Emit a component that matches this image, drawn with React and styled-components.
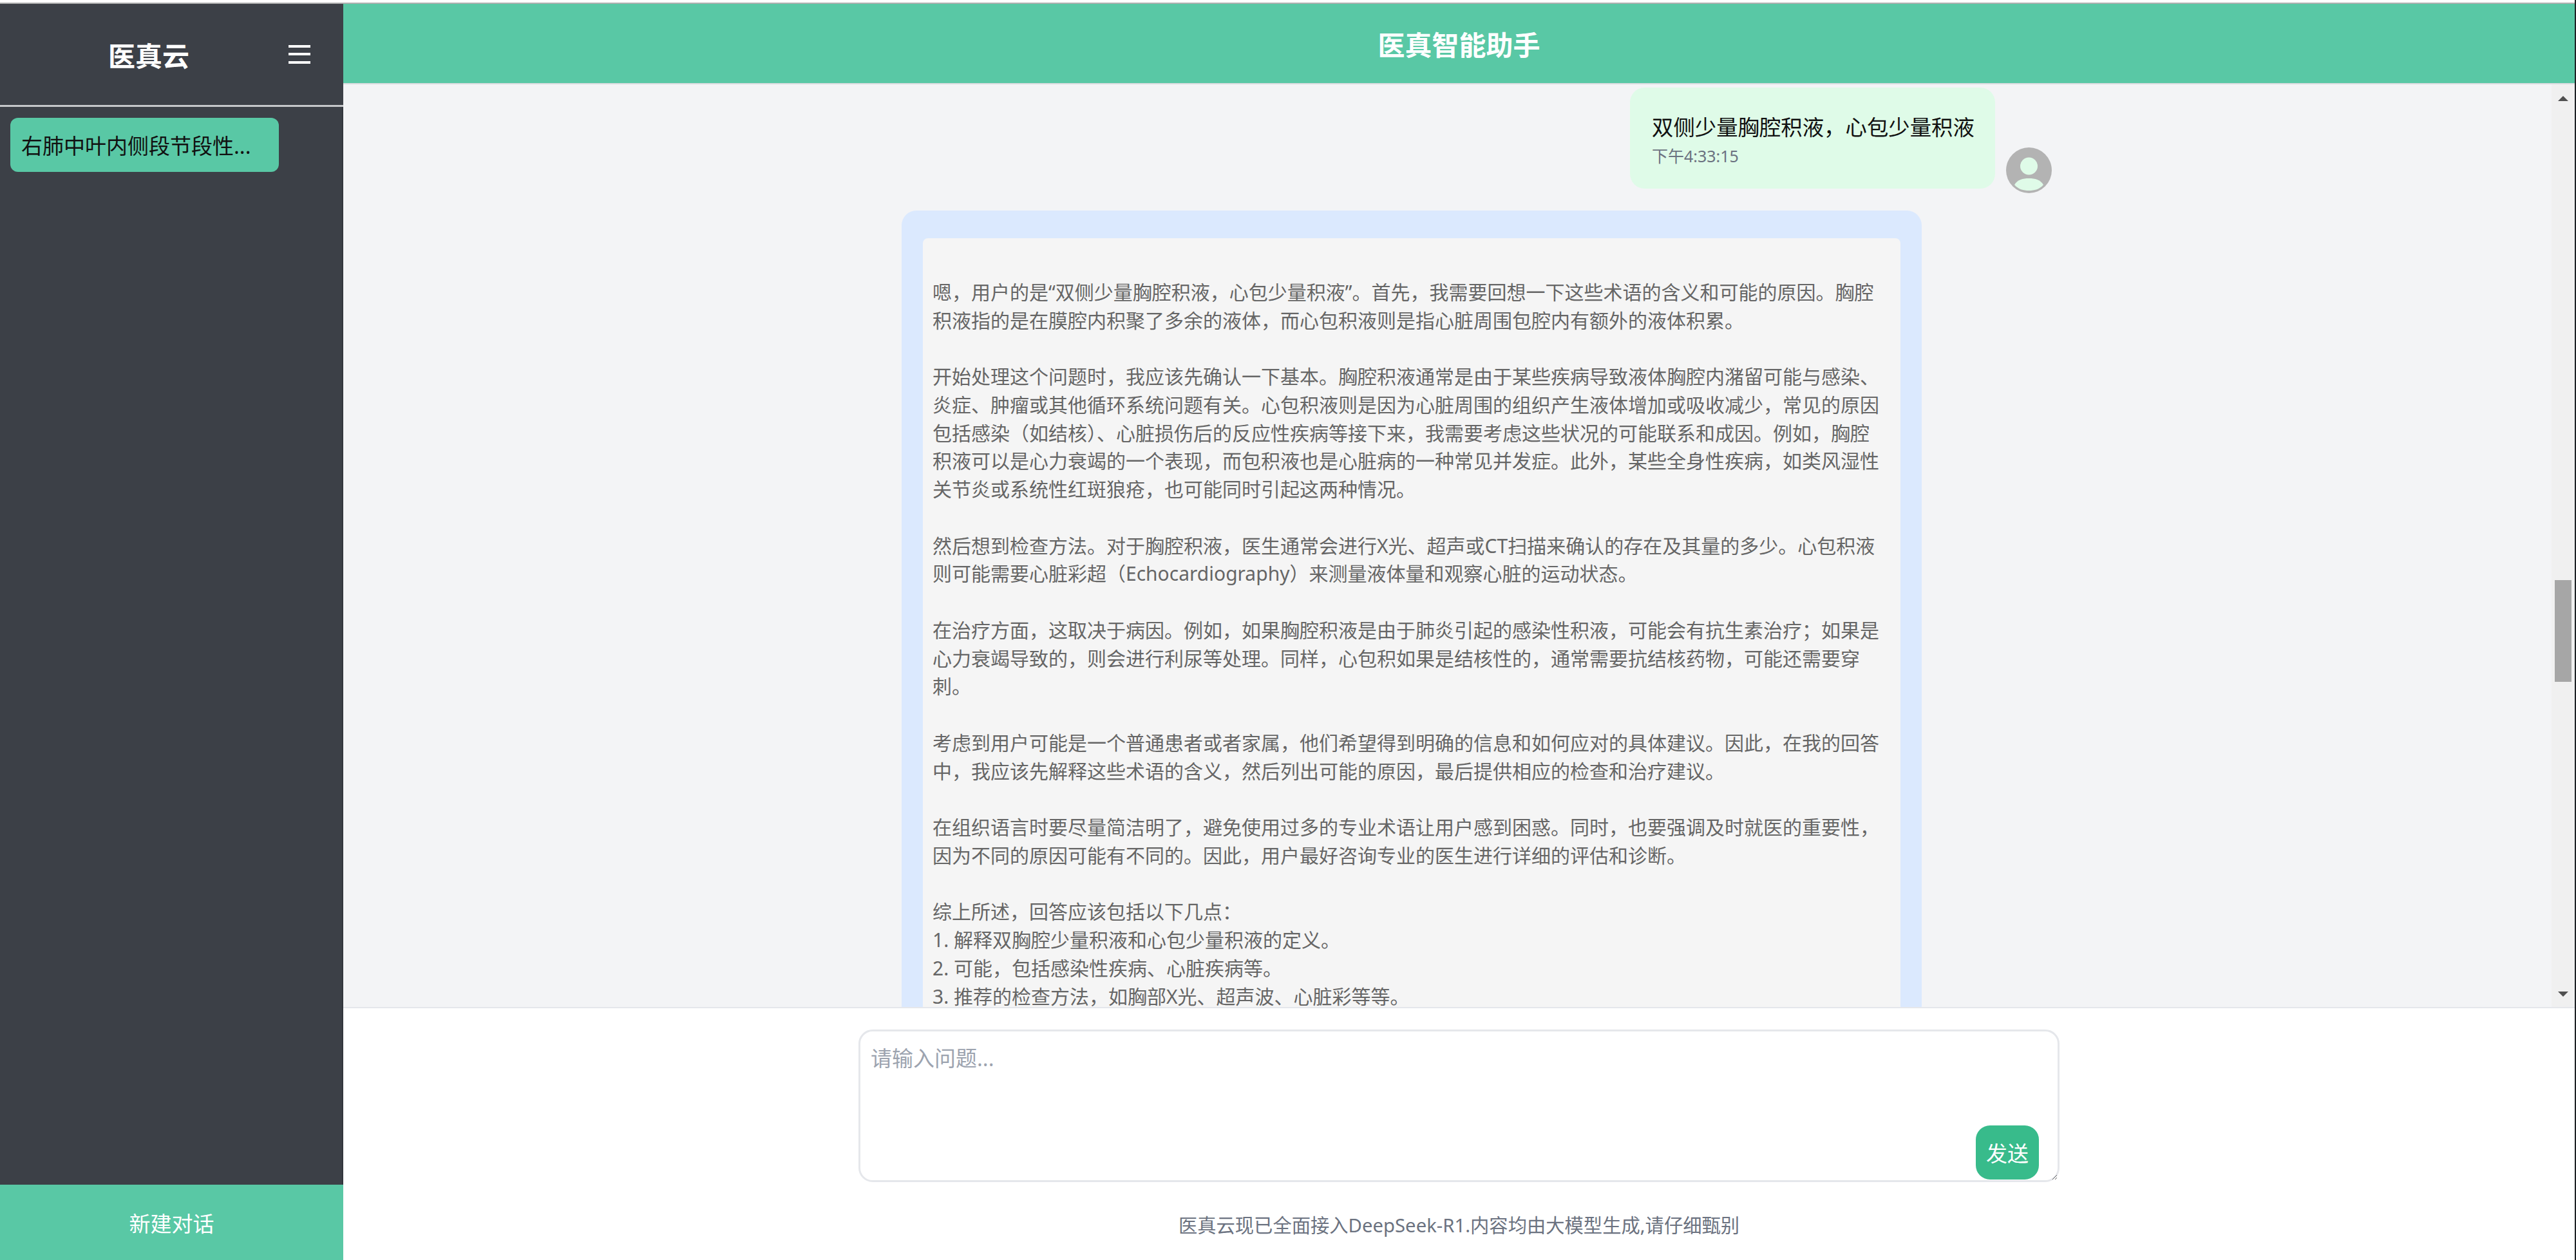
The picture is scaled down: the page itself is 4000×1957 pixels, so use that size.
import React from 'react'
import styled, { createGlobalStyle } from 'styled-components'

const GlobalStyle = createGlobalStyle`
  html, body {
    margin: 0;
    padding: 0;
    background: #fff;
  }
  * {
    box-sizing: border-box;
  }
  body {
    font-family: "Noto Sans", "Noto Sans CJK SC", sans-serif;
  }
`

const Shell = styled.div`
  display: flex;
  flex-direction: column;
  height: 100vh;
  overflow: hidden;
  border-right: 2px solid #1e2226;
`

const TopStrip = styled.div`
  flex: none;
  height: 6px;
  background: #fff;
  border-bottom: 2px solid #b0b0b0;
`

const Body = styled.div`
  flex: 1;
  display: flex;
  min-height: 0;
`

const Sidebar = styled.aside`
  flex: none;
  width: 533px;
  display: flex;
  flex-direction: column;
  background: #3c4047;
`

const SidebarHead = styled.div`
  flex: none;
  height: 160px;
  display: flex;
  align-items: center;
  justify-content: space-between;
  padding: 0 51px 0 168px;
  border-bottom: 3px solid #c6c8cb;
`

const Brand = styled.div`
  font-size: 42px;
  font-weight: 700;
  color: #fff;
  white-space: nowrap;
`

const MenuButton = styled.button`
  display: flex;
  padding: 0;
  border: none;
  background: none;
`

const HistoryList = styled.div`
  flex: 1;
  padding: 17px 16px;
  border-right: 2px solid rgba(0, 0, 0, 0.14);
`

const HistoryItem = styled.div`
  width: 417px;
  height: 84px;
  display: flex;
  align-items: center;
  padding-left: 17px;
  border-radius: 12px;
  background: #59c8a5;
  font-size: 33px;
  color: #111;
  white-space: nowrap;
`

const NewChat = styled.button`
  flex: none;
  height: 117px;
  border: none;
  background: #59c8a5;
  font: inherit;
  font-size: 33px;
  color: #fff;
`

const Main = styled.main`
  flex: 1;
  min-width: 0;
  display: flex;
  flex-direction: column;
`

const MainHeader = styled.header`
  flex: none;
  height: 125px;
  display: flex;
  align-items: center;
  justify-content: center;
  background: #59c8a5;
  border-bottom: 2px solid #d9dcdf;
  font-size: 42px;
  font-weight: 700;
  color: #fff;
`

const ChatArea = styled.div`
  flex: 1;
  min-height: 0;
  display: flex;
  background: #f3f4f6;
`

// left padding balances the scrollbar so the thread stays centred in the main column
const Thread = styled.div`
  flex: 1;
  min-width: 0;
  overflow: hidden;
  display: flex;
  flex-direction: column;
  gap: 27px;
  padding: 5px 0 0 36px;
`

const UserRow = styled.div`
  flex: none;
  width: 1863px;
  margin: 0 auto;
  padding-right: 11px;
  display: flex;
  justify-content: flex-end;
  align-items: flex-end;
  gap: 17px;
`

const UserBubble = styled.div`
  width: 567px;
  height: 157px;
  margin-bottom: 7px;
  padding: 38px 34px 0;
  border-radius: 23px;
  background: #dffbe8;
`

const UserText = styled.div`
  font-size: 33.4px;
  line-height: 46px;
  color: #111;
  white-space: nowrap;
`

const TimeText = styled.div`
  margin-top: 5px;
  font-size: 25px;
  line-height: 34px;
  color: #6b7280;
`

const AvatarIcon = styled.svg`
  flex: none;
  width: 71px;
  height: 71px;
`

const AnswerBubble = styled.div`
  flex: none;
  width: 1584px;
  margin-left: calc((100% - 1863px) / 2 + 66px);
  padding: 43px 33px;
  border-radius: 23px;
  background: #dbe9fe;
`

const AnswerBody = styled.div`
  padding: 18px 15px 16px;
  border-radius: 8px;
  background: #f5f5f5;
  font-size: 30px;
  line-height: 43.75px;
  color: #666;
  white-space: pre;
`

const ScrollTrack = styled.div`
  flex: none;
  width: 36px;
  display: flex;
  flex-direction: column;
  align-items: center;
  padding: 18px 0 16px;
  background: #f0f0f0;
`

const ScrollArrow = styled.svg`
  flex: none;
  width: 16px;
  height: 8px;
`

const ScrollThumb = styled.div`
  flex: none;
  width: 26px;
  height: 158px;
  margin: 744px 0 auto;
  background: #a6a6a6;
`

const Composer = styled.footer`
  flex: none;
  height: 393px;
  padding-top: 33px;
  background: #fff;
  border-top: 2px solid #e5e7eb;
`

const InputWrap = styled.div`
  position: relative;
  display: flex;
  width: 1865px;
  height: 237px;
  margin: 0 auto;
`

const Question = styled.textarea`
  width: 100%;
  height: 100%;
  padding: 20px 16px;
  border: 3px solid #e5e7eb;
  border-radius: 22px;
  outline: none;
  font: inherit;
  font-size: 33px;
  line-height: 44px;
  color: #111;
  &::placeholder {
    color: #9ca3af;
  }
`

const SendButton = styled.button`
  position: absolute;
  right: 32px;
  bottom: 4px;
  width: 98px;
  height: 84px;
  border: none;
  border-radius: 22px;
  background: #38bb8b;
  font: inherit;
  font-size: 33px;
  color: #fff;
`

const Notice = styled.div`
  margin-top: 45px;
  font-size: 29.3px;
  line-height: 44px;
  text-align: center;
  color: #6b7280;
`

const answer = `
嗯，用户的是“双侧少量胸腔积液，心包少量积液”。首先，我需要回想一下这些术语的含义和可能的原因。胸腔
积液指的是在膜腔内积聚了多余的液体，而心包积液则是指心脏周围包腔内有额外的液体积累。

开始处理这个问题时，我应该先确认一下基本。胸腔积液通常是由于某些疾病导致液体胸腔内潴留可能与感染、
炎症、肿瘤或其他循环系统问题有关。心包积液则是因为心脏周围的组织产生液体增加或吸收减少，常见的原因
包括感染（如结核）、心脏损伤后的反应性疾病等接下来，我需要考虑这些状况的可能联系和成因。例如，胸腔
积液可以是心力衰竭的一个表现，而包积液也是心脏病的一种常见并发症。此外，某些全身性疾病，如类风湿性
关节炎或系统性红斑狼疮，也可能同时引起这两种情况。

然后想到检查方法。对于胸腔积液，医生通常会进行X光、超声或CT扫描来确认的存在及其量的多少。心包积液
则可能需要心脏彩超（Echocardiography）来测量液体量和观察心脏的运动状态。

在治疗方面，这取决于病因。例如，如果胸腔积液是由于肺炎引起的感染性积液，可能会有抗生素治疗；如果是
心力衰竭导致的，则会进行利尿等处理。同样，心包积如果是结核性的，通常需要抗结核药物，可能还需要穿
刺。

考虑到用户可能是一个普通患者或者家属，他们希望得到明确的信息和如何应对的具体建议。因此，在我的回答
中，我应该先解释这些术语的含义，然后列出可能的原因，最后提供相应的检查和治疗建议。

在组织语言时要尽量简洁明了，避免使用过多的专业术语让用户感到困惑。同时，也要强调及时就医的重要性，
因为不同的原因可能有不同的。因此，用户最好咨询专业的医生进行详细的评估和诊断。

综上所述，回答应该包括以下几点：
1. 解释双胸腔少量积液和心包少量积液的定义。
2. 可能，包括感染性疾病、心脏疾病等。
3. 推荐的检查方法，如胸部X光、超声波、心脏彩等等。`

export default function App() {
  return (
    <Shell>
      <GlobalStyle />
      <TopStrip />
      <Body>
        <Sidebar>
          <SidebarHead>
            <Brand>医真云</Brand>
            <MenuButton aria-label="menu">
              <svg width="34" height="29" viewBox="0 0 34 29">
                <rect x="0" y="0" width="34" height="4" fill="#fff" />
                <rect x="0" y="12" width="34" height="4" fill="#fff" />
                <rect x="0" y="25" width="34" height="4" fill="#fff" />
              </svg>
            </MenuButton>
          </SidebarHead>
          <HistoryList>
            <HistoryItem>右肺中叶内侧段节段性...</HistoryItem>
          </HistoryList>
          <NewChat>新建对话</NewChat>
        </Sidebar>
        <Main>
          <MainHeader>医真智能助手</MainHeader>
          <ChatArea>
            <Thread>
              <UserRow>
                <UserBubble>
                  <UserText>双侧少量胸腔积液，心包少量积液</UserText>
                  <TimeText>下午4:33:15</TimeText>
                </UserBubble>
                <AvatarIcon viewBox="0 0 71 71">
                  <circle cx="35.5" cy="35.5" r="35.5" fill="#b3b3b3" />
                  <circle cx="35.5" cy="29" r="13.5" fill="#dffbe8" />
                  <path d="M13 58 C18 50 26 48 35.5 48 C45 48 53 50 58 58 C52 65 44 67 35.5 67 C27 67 19 65 13 58 Z" fill="#dffbe8" />
                </AvatarIcon>
              </UserRow>
              <AnswerBubble>
                <AnswerBody>{answer}</AnswerBody>
              </AnswerBubble>
            </Thread>
            <ScrollTrack>
              <ScrollArrow viewBox="0 0 16 8">
                <path d="M8 0 L16 8 L0 8 Z" fill="#505050" />
              </ScrollArrow>
              <ScrollThumb />
              <ScrollArrow viewBox="0 0 16 8">
                <path d="M0 0 L16 0 L8 8 Z" fill="#505050" />
              </ScrollArrow>
            </ScrollTrack>
          </ChatArea>
          <Composer>
            <InputWrap>
              <Question placeholder="请输入问题..." />
              <SendButton>发送</SendButton>
            </InputWrap>
            <Notice>医真云现已全面接入DeepSeek-R1.内容均由大模型生成,请仔细甄别</Notice>
          </Composer>
        </Main>
      </Body>
    </Shell>
  )
}
